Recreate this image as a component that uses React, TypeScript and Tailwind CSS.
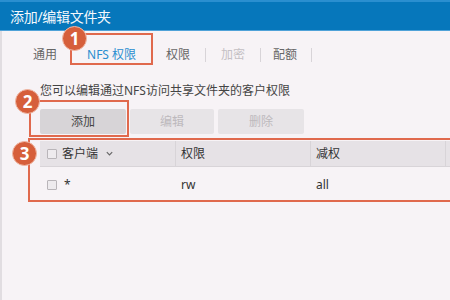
import React from 'react';

const font = { fontFamily: '"Noto Sans", "Noto Sans CJK SC", sans-serif' };

const Badge = ({ n, className }: { n: string; className: string }) => (
  <div
    className={`absolute w-[25px] h-[25px] rounded-full bg-[#d65f3b] border border-[#f0b9a6] text-white text-[17px] font-bold flex items-center justify-center leading-none ${className}`}
  >
    {n}
  </div>
);

const Check = () => (
  <span className="inline-block w-[10px] h-[10px] border border-[#b9b5b9] bg-[#eeebee] rounded-[1px]" />
);

export default function App() {
  return (
    <div className="relative w-[450px] h-[300px] overflow-hidden bg-[#f7f3f6] text-[#333]" style={font}>
      <div className="h-[31px] bg-[#0677bb] border-t-2 border-[#2a8fd0] border-b border-b-[#4fa2d8] flex items-center pl-[10px]">
        <span className="text-[#f4f8fc] text-[14px] tracking-[-0.3px]">添加/编辑文件夹</span>
      </div>

      <div className="border-l-2 border-[#e1dde1] h-[269px]">
        <div className="flex items-center h-[46px] pt-[1px] text-[12px] pl-[31px]">
          <span className="text-[#666]">通用</span>
          <span className="ml-[30px] text-[#2b8ed0]">NFS 权限</span>
          <span className="ml-[30px] text-[#666]">权限</span>
          <span className="ml-[15px] w-px h-[14px] bg-[#d8d4d8]" />
          <span className="ml-[15px] text-[#c4c0c4]">加密</span>
          <span className="ml-[15px] w-px h-[14px] bg-[#d8d4d8]" />
          <span className="ml-[12px] text-[#666]">配额</span>
          <span className="ml-[14px] w-px h-[14px] bg-[#d8d4d8]" />
        </div>

        <div className="pl-[38px]">
          <p className="text-[12px] leading-[26px] text-[#444] mt-[1px]">您可以编辑通过NFS访问共享文件夹的客户权限</p>

          <div className="flex gap-[4px] mt-[5px] text-[12px]">
            <button className="w-[86px] h-[25px] rounded-[2px] bg-[#d7d4d7] text-[#444]">添加</button>
            <button className="w-[84px] h-[25px] rounded-[2px] bg-[#e7e4e7] text-[#bdb9bd]">编辑</button>
            <button className="w-[86px] h-[25px] rounded-[2px] bg-[#e7e4e7] text-[#bdb9bd]">删除</button>
          </div>

          <div className="mt-[7px] text-[12px] w-[500px]">
            <div className="flex h-[26px] bg-[#e6e2e6] border-b border-[#d8d4d8] items-center">
              <div className="w-[135px] flex items-center pl-[7px] gap-[5px]">
                <Check />
                <span>客户端</span>
                <svg width="9" height="9" viewBox="0 0 10 10" className="ml-[2px]">
                  <path d="M2 3.5 L5 6.5 L8 3.5" fill="none" stroke="#666" strokeWidth="1.3" />
                </svg>
              </div>
              <div className="w-[135px] h-full border-l border-[#d8d4d8] flex items-center pl-[5px]">权限</div>
              <div className="w-[135px] h-full border-l border-[#d8d4d8] flex items-center pl-[5px]">减权</div>
              <div className="flex-1 h-full border-l border-[#d8d4d8] flex items-center pl-[5px]">匿</div>
            </div>
            <div className="flex h-[35px] items-center">
              <div className="w-[135px] flex items-center pl-[7px] gap-[7px]">
                <Check />
                <span>*</span>
              </div>
              <div className="w-[135px] pl-[6px]">rw</div>
              <div className="w-[135px] pl-[6px]">all</div>
              <div className="flex-1 pl-[6px]">a</div>
            </div>
          </div>
        </div>
      </div>

      <div className="absolute left-[70px] top-[33px] w-[83px] h-[32px] border-2 border-[#e0694d]" />
      <div className="absolute left-[29px] top-[100px] w-[100px] h-[37px] border-2 border-[#e0694d]" />
      <div className="absolute left-[28px] top-[138px] w-[440px] h-[64px] border-2 border-[#e0694d]" />

      <Badge n="1" className="left-[62px] top-[26px]" />
      <Badge n="2" className="left-[15px] top-[89px]" />
      <Badge n="3" className="left-[12px] top-[141px]" />
    </div>
  );
}
